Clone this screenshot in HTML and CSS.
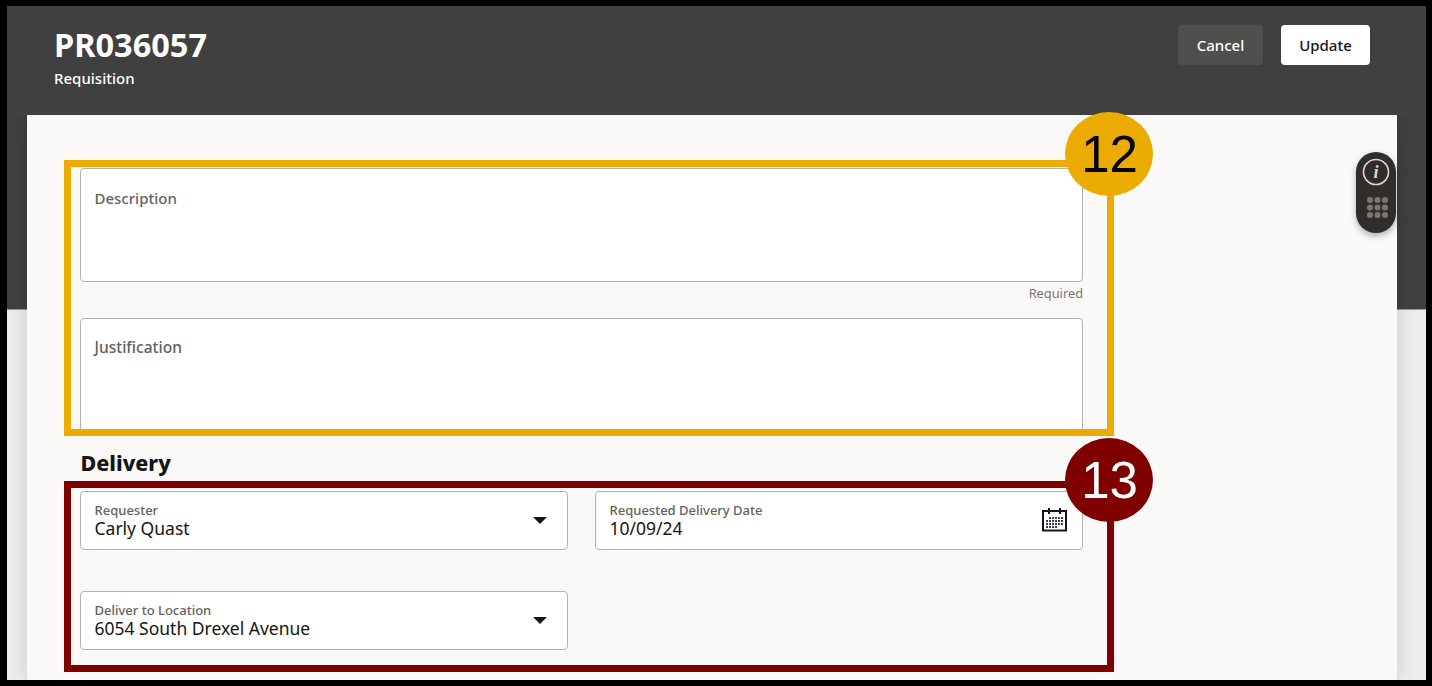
FILE: index.html
```html
<!DOCTYPE html>
<html lang="en">
<head>
<meta charset="utf-8">
<title>PR036057</title>
<link rel="stylesheet" href="styles.css">
</head>
<body>
<div class="frame">
  <header class="head">
    <div class="head-titles">
      <h1 class="title">PR036057</h1>
      <div class="subtitle">Requisition</div>
    </div>
    <div class="actions">
      <button class="btn btn-cancel">Cancel</button>
      <button class="btn btn-update">Update</button>
    </div>
  </header>
  <main class="card">
    <div class="form">
      <div class="area"><span class="area-label">Description</span></div>
      <div class="required">Required</div>
      <div class="area area-tight"><span class="area-label">Justification</span></div>
      <h2 class="section">Delivery</h2>
      <div class="fields">
        <div class="field">
          <div class="field-text"><span class="field-label">Requester</span><span class="field-value">Carly Quast</span></div>
          <span class="caret"></span>
        </div>
        <div class="field">
          <div class="field-text"><span class="field-label">Requested Delivery Date</span><span class="field-value">10/09/24</span></div>
          <svg class="cal" viewBox="0 0 25 25" width="25" height="25" aria-hidden="true">
            <rect x="1" y="4" width="23" height="19.5" fill="#fff" stroke="#14141e" stroke-width="2"/>
            <rect x="6" y="1" width="2" height="6" fill="#14141e"/>
            <rect x="17" y="1" width="2" height="6" fill="#14141e"/>
            <g fill="#3c3c50">
              <rect x="7" y="10" width="2" height="2"/><rect x="10" y="10" width="2" height="2"/><rect x="13" y="10" width="2" height="2"/><rect x="16" y="10" width="2" height="2"/><rect x="19" y="10" width="2" height="2"/>
              <rect x="4" y="13" width="2" height="2"/><rect x="7" y="13" width="2" height="2"/><rect x="10" y="13" width="2" height="2"/><rect x="13" y="13" width="2" height="2"/><rect x="16" y="13" width="2" height="2"/><rect x="19" y="13" width="2" height="2"/>
              <rect x="4" y="16" width="2" height="2"/><rect x="7" y="16" width="2" height="2"/><rect x="10" y="16" width="2" height="2"/><rect x="13" y="16" width="2" height="2"/><rect x="16" y="16" width="2" height="2"/><rect x="19" y="16" width="2" height="2"/>
              <rect x="4" y="19" width="2" height="2"/><rect x="7" y="19" width="2" height="2"/><rect x="10" y="19" width="2" height="2"/><rect x="13" y="19" width="2" height="2"/>
            </g>
          </svg>
        </div>
        <div class="field">
          <div class="field-text"><span class="field-label">Deliver to Location</span><span class="field-value">6054 South Drexel Avenue</span></div>
          <span class="caret"></span>
        </div>
      </div>
    </div>
  </main>

  <div class="mark mark-yellow"></div>
  <div class="badge badge-yellow">12</div>
  <div class="mark mark-red"></div>
  <div class="badge badge-red">13</div>

  <div class="dock">
    <svg viewBox="0 0 40 81" width="40" height="81" aria-hidden="true">
      <circle cx="20" cy="20" r="12.5" fill="none" stroke="#d9d7d5" stroke-width="1.6"/>
      <text x="20" y="26" class="dock-i">i</text>
      <g fill="#7b7673">
        <circle cx="14" cy="48" r="3"/><circle cx="21.500" cy="48" r="3"/><circle cx="29" cy="48" r="3"/>
        <circle cx="14" cy="55.500" r="3"/><circle cx="21.500" cy="55.500" r="3"/><circle cx="29" cy="55.500" r="3"/>
        <circle cx="14" cy="63" r="3"/><circle cx="21.500" cy="63" r="3"/><circle cx="29" cy="63" r="3"/>
      </g>
    </svg>
  </div>
</div>
</body>
</html>
```

FILE: styles.css
```css
* { box-sizing: border-box; }

html, body {
  margin: 0;
  height: 100%;
  background: #000;
  overflow: hidden;
}

.frame {
  position: relative;
  width: 1419px;
  height: 674px;
  margin: 6px 0 0 7px;
  padding-right: 2px;
  font-family: "Noto Sans", "Open Sans", sans-serif;
  background: linear-gradient(#404040 303px, #9a9a9a 303px, #9a9a9a 304px, #efeeec 304px);
  display: flex;
  flex-direction: column;
}

.head {
  height: 109px;
  padding: 18px 54px 0 47px;
  display: flex;
  justify-content: space-between;
  align-items: flex-start;
  background: #404040;
  flex: none;
}

.title {
  margin: 0;
  font-size: 32.500px;
  line-height: 42px;
  font-weight: 700;
  color: #fff;
}

.subtitle {
  margin-top: 2px;
  font-size: 15px;
  line-height: 20px;
  font-weight: 500;
  color: #fff;
}

.actions {
  display: flex;
  gap: 18px;
  margin-top: 1px;
}

.btn {
  height: 40px;
  border: 0;
  border-radius: 4px;
  font-family: inherit;
  font-size: 15px;
  font-weight: 500;
}

.btn-cancel {
  width: 85px;
  background: #4f4f4e;
  color: #fff;
}

.btn-update {
  width: 89px;
  background: #fff;
  color: #161513;
}

.card {
  flex: 1;
  margin: 0 27px 0 20px;
  padding: 53px 0 0 53px;
  background: #fbf9f8;
  box-shadow: 0 0 22px rgba(0, 0, 0, 0.16);
  clip-path: inset(0 -30px 0 -30px);
}

.form {
  width: 1003px;
}

.area {
  height: 114px;
  padding: 18px 13.500px;
  background: #fff;
  border: 1px solid #b3b1af;
  border-radius: 4px;
}

.area-tight {
  padding-top: 17px;
}

.area-label {
  font-size: 15px;
  line-height: 20px;
  font-weight: 500;
  color: #65615d;
}

.area-tight .area-label {
  font-size: 15.500px;
}

.required {
  height: 36px;
  padding-top: 2px;
  text-align: right;
  font-size: 12.800px;
  line-height: 18px;
  color: #7a7672;
}

.section {
  margin: 17px 0 0 0.500px;
  font-size: 21.500px;
  line-height: 27px;
  font-weight: 800;
  color: #161513;
}

.fields {
  margin-top: 15px;
  display: grid;
  grid-template-columns: 488px 488px;
  column-gap: 27px;
  row-gap: 41px;
}

.field {
  height: 59px;
  padding: 0 16px 1px 13.500px;
  display: flex;
  align-items: center;
  justify-content: space-between;
  background: #fff;
  border: 1px solid #b3b1af;
  border-radius: 4px;
}

.field-text {
  display: flex;
  flex-direction: column;
}

.field-label {
  font-size: 13px;
  line-height: 16px;
  font-weight: 500;
  color: #65615d;
}

.field-value {
  font-size: 17.500px;
  line-height: 20px;
  color: #161513;
}

.caret {
  width: 0;
  height: 0;
  margin-right: 4px;
  border-left: 7px solid transparent;
  border-right: 7px solid transparent;
  border-top: 7px solid #161513;
}

.cal {
  margin-top: -1px;
  margin-right: -1px;
}

.mark {
  position: absolute;
  left: 57px;
  width: 1050px;
  border-style: solid;
  border-width: 7px;
}

.mark-yellow {
  top: 154px;
  height: 276px;
  border-color: #ecab00;
}

.mark-red {
  top: 475px;
  height: 191px;
  border-color: #800000;
}

.badge {
  position: absolute;
  left: 1058px;
  width: 88px;
  height: 84px;
  border-radius: 50%;
  display: flex;
  align-items: center;
  justify-content: center;
  font-family: "Liberation Sans", Arial, sans-serif;
  font-size: 51px;
  padding-left: 1px;
}

.badge-yellow {
  top: 106px;
  background: #ecab00;
  color: #000;
}

.badge-red {
  top: 432px;
  background: #800000;
  color: #fff;
}

.dock {
  position: absolute;
  left: 1349px;
  top: 146px;
  width: 40px;
  height: 81px;
  background: #312d2a;
  border-radius: 20px;
  box-shadow: 0 3px 6px rgba(0, 0, 0, 0.3);
  display: flex;
}

.dock-i {
  font-family: "Liberation Serif", serif;
  font-style: italic;
  font-weight: 700;
  font-size: 18px;
  fill: #d9d7d5;
  text-anchor: middle;
}
```
